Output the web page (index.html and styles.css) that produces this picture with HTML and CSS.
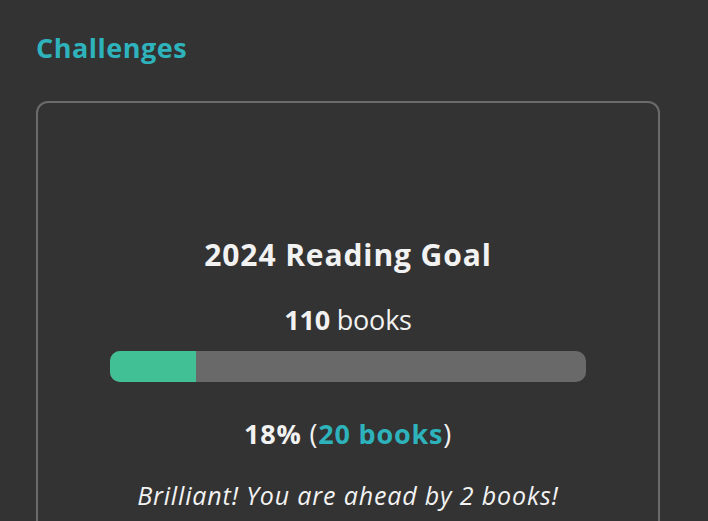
FILE: index.html
```html
<!DOCTYPE html>
<html>
<head>
<meta charset="utf-8">
<link rel="stylesheet" href="styles.css">
</head>
<body>
<main class="page">
  <h2 class="section-title">Challenges</h2>
  <section class="card">
    <h3 class="goal-title">2024 Reading Goal</h3>
    <p class="goal-count"><strong>110</strong> books</p>
    <div class="bar"><div class="bar-fill" style="width:18%"></div></div>
    <p class="goal-progress"><strong>18%</strong> (<strong class="accent">20 books</strong>)</p>
    <p class="goal-note">Brilliant! You are ahead by 2 books!</p>
  </section>
</main>
</body>
</html>
```
FILE: styles.css
```css
html, body {
  margin: 0;
  background: #333333;
  font-family: "Open Sans", "Noto Sans", sans-serif;
  color: #f2f2f2;
}
.page {
  padding: 28px 48px 0 36px;
}
.section-title {
  margin: 0;
  font-size: 27px;
  font-weight: 700;
  color: #2eb3bd;
  letter-spacing: 0.5px;
  line-height: 40px;
}
.card {
  margin-top: 33px;
  border: 2px solid #6b6b6b;
  border-radius: 12px;
  padding: 130px 72px 20px;
  text-align: center;
}
.goal-title {
  margin: 0;
  font-size: 30px;
  font-weight: 700;
  letter-spacing: 0.9px;
  line-height: 44px;
}
.goal-count {
  margin: 23px 0 0;
  font-size: 27px;
  letter-spacing: -0.2px;
  line-height: 40px;
  font-weight: 400;
}
.goal-count strong { font-weight: 700; }
.bar {
  margin-top: 11px;
  height: 31px;
  background: #696969;
  border-radius: 10px;
  overflow: hidden;
}
.bar-fill {
  height: 100%;
  background: #41c095;
}
.goal-progress {
  margin: 32px 0 0;
  font-size: 27px;
  letter-spacing: 0.8px;
  line-height: 40px;
  font-weight: 400;
}
.goal-progress strong { font-weight: 700; }
.accent { color: #2eb3bd; }
.goal-note {
  margin: 24px 0 0;
  font-size: 25px;
  font-style: italic;
  letter-spacing: 0.85px;
  line-height: 34px;
}
```
